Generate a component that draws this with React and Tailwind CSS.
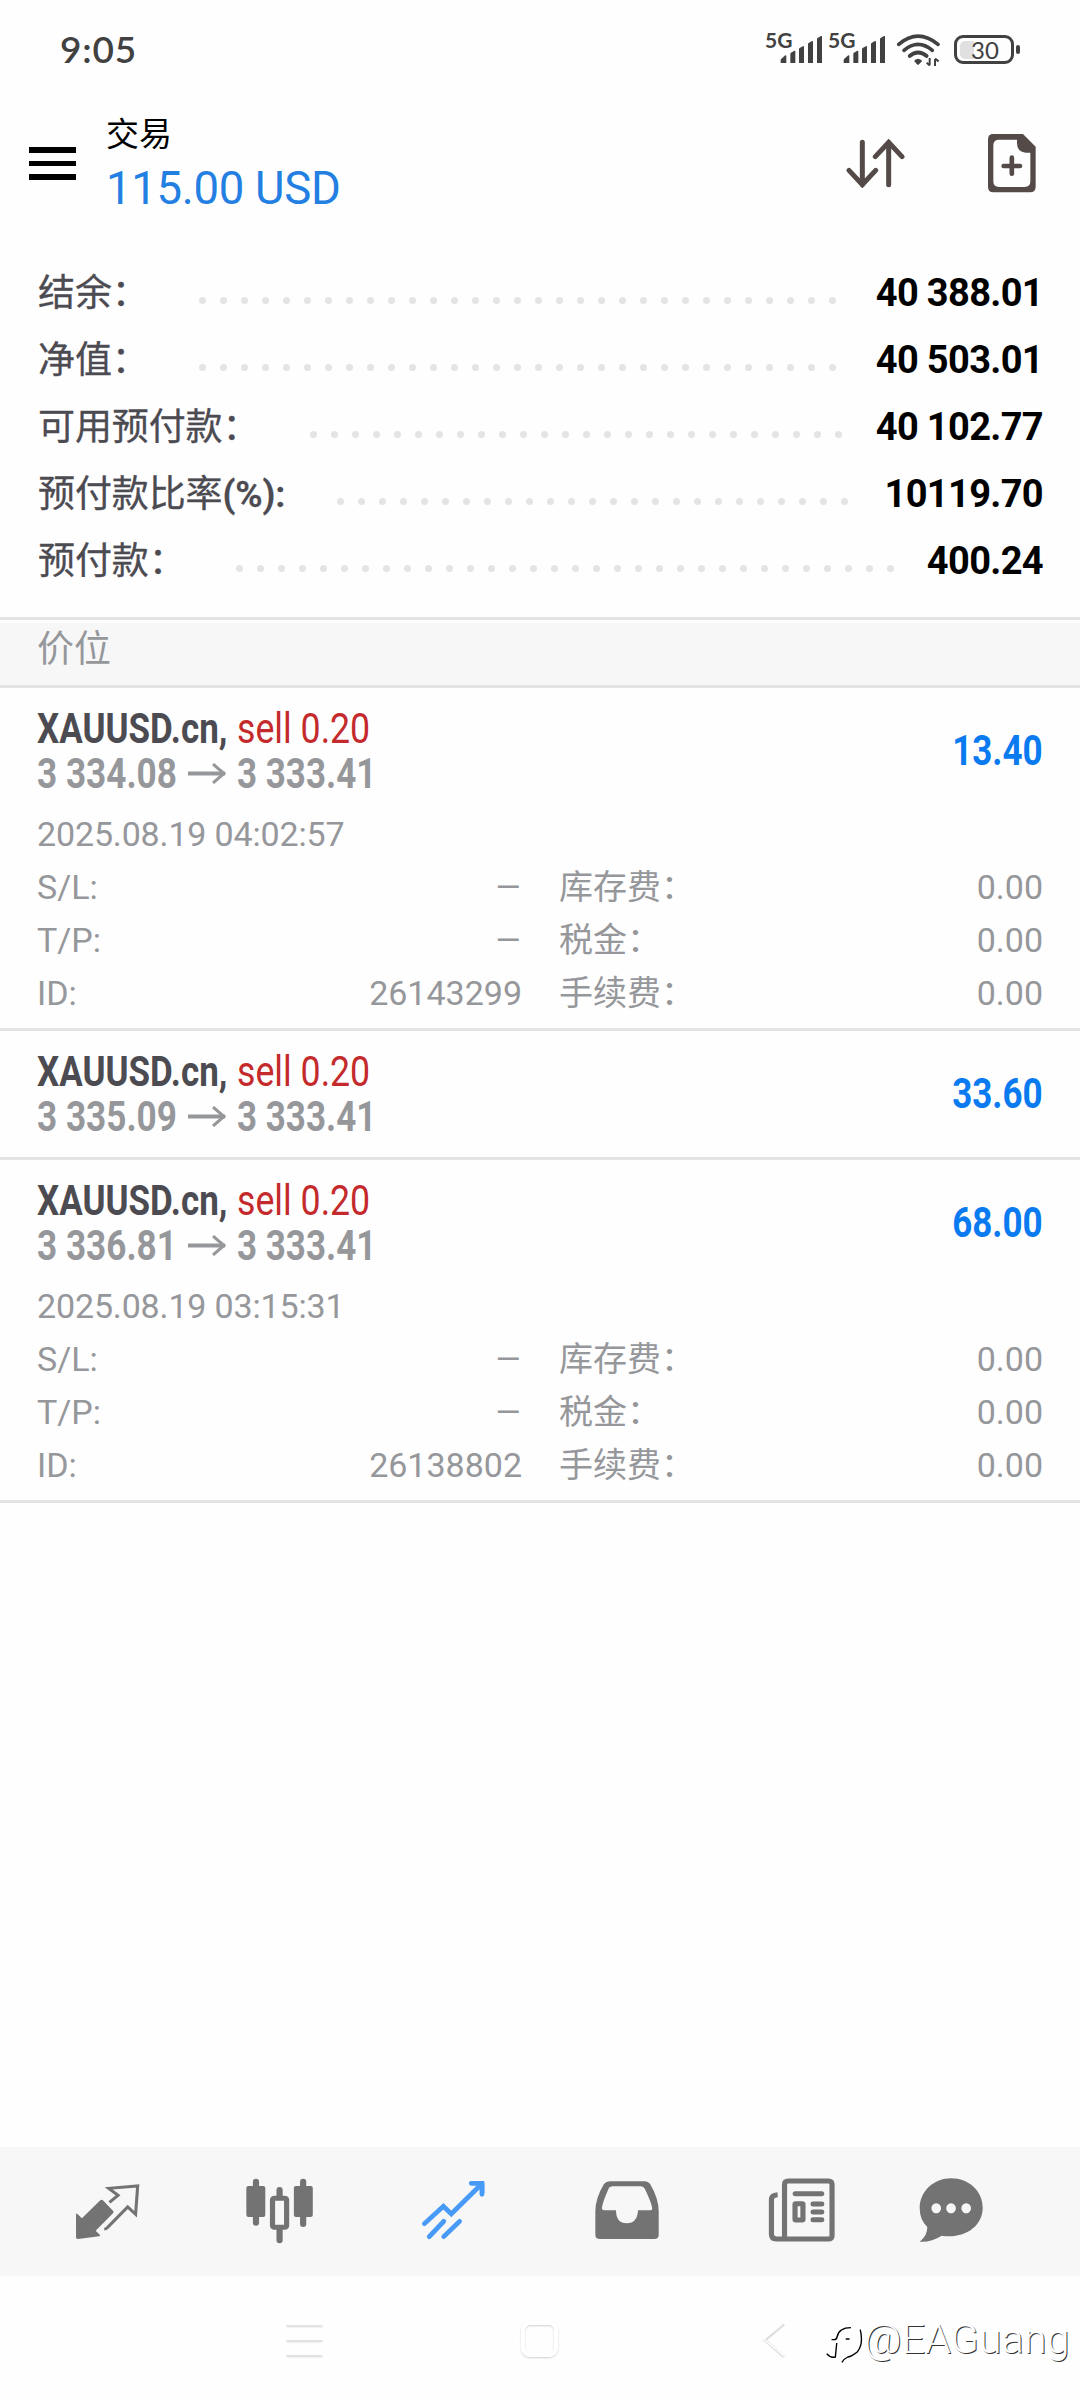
const GREY = "#737373";

/* Icons on the tab bar share one drawing grid of 2.904 x 3 units per pixel. */
function Glyph({ x, y, w, h, className = "", children }) {
  return (
    <svg
      className={"block shrink-0 " + className}
      style={{ width: w / 2.904, height: h / 3 }}
      viewBox={`${x} ${y} ${w} ${h}`}
      preserveAspectRatio="none"
      fill="none"
    >
      {children}
    </svg>
  );
}

function Signal() {
  return (
    <div className="flex h-[40px] w-[57px] items-start">
      <span className="-mt-px w-[15px] text-[21px] leading-[22px] font-bold text-[#414141] font-['Lato',sans-serif]">5G</span>
      <svg className="mt-[6px] h-[27px] w-[42px] shrink-0" viewBox="0 0 126 80" preserveAspectRatio="none" fill="#414141">
        <path d="M2 79v-7q0-3 3-5l10-9q4-2 4 2v19q0 2-2 2H4q-2 0-2-2z" />
        <path d="M31 79V53q0-3 3-4l9-5q3-1 3 2v33q0 2-2 2H33q-2 0-2-2z" />
        <path d="M57 79V39q0-3 3-4l9-5q3-1 3 2v47q0 2-2 2H59q-2 0-2-2z" />
        <path d="M84 79V24q0-3 3-4l9-5q3-1 3 2v62q0 2-2 2H86q-2 0-2-2z" />
        <path d="M111 79V9q0-3 3-4l9-5q3-1 3 2v77q0 2-2 2h-11q-2 0-2-2z" />
      </svg>
    </div>
  );
}

function StatusBar() {
  return (
    <div className="flex h-[104px] items-start justify-between pl-[60px] pr-[60px] pt-[30px]">
      <span className="-mt-px text-[37px] leading-[40px] tracking-[0.8px] font-semibold text-[#414141] font-['Lato',sans-serif]">9:05</span>
      <div className="flex items-start">
        <div className="flex gap-[6px]">
          <Signal />
          <Signal />
        </div>
        <svg className="ml-[12px] mt-[4px] h-[34px] w-[43px]" viewBox="473 102 129 102" fill="none" stroke="#414141">
          <path d="M478 133Q536 84 596 133" strokeWidth="11" strokeLinecap="round" />
          <path d="M494 151Q536 115 579 151" strokeWidth="11" strokeLinecap="round" />
          <path d="M511 168Q536 147 562 168" strokeWidth="11" strokeLinecap="round" />
          <path d="M525 184q0-6 11-8 11 2 12 8l-9 9q-3 3-6 0z" fill="#414141" stroke="none" />
          <path d="M571 174v22M562 188l9 9M587 198v-21M587 176l11 8" strokeWidth="6" />
        </svg>
        <div className="ml-[14px] mt-[5px] flex items-center gap-[2px]">
          <div className="flex h-[29px] w-[60px] items-center rounded-[9px] border-[3px] border-[#414141] p-[3px]">
            <div className="h-[18px] w-[14px] shrink-0 rounded-l-[5px] bg-[#e0e0e0]" />
            <span className="-ml-[3px] text-[24px] leading-[20px] text-[#414141] font-['Lato',sans-serif]">30</span>
          </div>
          <div className="h-[9px] w-[4px] rounded-[2px] bg-[#414141]" />
        </div>
      </div>
    </div>
  );
}

function Header() {
  return (
    <header className="flex h-[154px] items-start">
      <div className="ml-[29px] mt-[43px] flex w-[47px] flex-col gap-[8px]">
        <div className="h-[5.5px] bg-black" />
        <div className="h-[5.5px] bg-black" />
        <div className="h-[5.5px] bg-black" />
      </div>
      <div className="ml-[30px] mt-[10px] flex flex-col">
        <span className="text-[33px] leading-[42px] text-black">交易</span>
        <span className="mt-[5px] text-[45.500px] leading-[56px] tracking-[-0.3px] text-[#237fe2]">115.00 USD</span>
      </div>
      <div className="ml-auto flex items-start pr-[44px] pt-[30px]">
        <svg className="mt-[5px] h-[49px] w-[60px]" viewBox="318 417 180 147" fill="none" stroke="#544b48" strokeWidth="15" strokeLinecap="round">
          <path d="M367 427v127M327 511l40 43 40-43M446 554V427M406 470l40-43 40 43" />
        </svg>
        <svg className="ml-[82px] h-[59px] w-[48px]" viewBox="743 403 144 177">
          <path fill="#544b48" fillRule="evenodd" d="M759 403h89l38 38v120q0 17-17 17H759q-16 0-16-17V419q0-16 16-16zM776 420q-17 0-17 17v108q0 17 17 17h77q17 0 17-17v-86h-14q-26-2-26-28v-11z" />
          <path stroke="#544b48" strokeWidth="14" strokeLinecap="round" d="M790 499h49M814.500 474v48" />
        </svg>
      </div>
    </header>
  );
}

const SUMMARY = [
  { label: "结余：", value: "40 388.01", dots: 31, start: 199 },
  { label: "净值：", value: "40 503.01", dots: 31, start: 199 },
  { label: "可用预付款：", value: "40 102.77", dots: 26, start: 310 },
  { label: "预付款比率", unit: "(%):", value: "10119.70", dots: 25, start: 337 },
  { label: "预付款：", value: "400.24", dots: 32, start: 236 },
];

function Summary() {
  return (
    <section className="flex h-[359px] flex-col pl-[38px] pr-[37px]">
      {SUMMARY.map((r) => (
        <div key={r.label} className="flex h-[67px] items-center">
          <div className="shrink-0 pt-[4px] text-[37px] leading-[67px] tracking-[-0.1px] whitespace-nowrap text-[#4c4b52] [-webkit-text-stroke:0.3px_#4c4b52]" style={{ width: r.start - 38 }}>
            {r.label}
            {r.unit && <span className="font-semibold">{r.unit}</span>}
          </div>
          <div className="mt-[18px] flex gap-[14px]">
            {Array.from({ length: r.dots }, (_, i) => (
              <span key={i} className="size-[7px] rounded-full bg-[#e4e4e4]" />
            ))}
          </div>
          <div className="ml-auto pt-[3px] text-[38px] leading-[67px] tracking-[-0.65px] font-bold whitespace-nowrap text-black">{r.value}</div>
        </div>
      ))}
    </section>
  );
}

function Arrow() {
  return (
    <svg className="ml-[12px] mr-[11px] h-[21px] w-[38px]" viewBox="0 0 38 21" fill="none" stroke="#96979b">
      <path d="M0 10.500h37" strokeWidth="4" />
      <path d="M25 1l11 9.500L25 20" strokeWidth="3" />
    </svg>
  );
}

function DetailRow({ name, value, name2, value2 }) {
  return (
    <div className="flex h-[53px] items-center text-[34px] leading-[53px]">
      <span>{name}</span>
      {value ? (
        <span className="ml-auto">{value}</span>
      ) : (
        <span className="ml-auto inline-block origin-right scale-x-[1.25]">–</span>
      )}
      <div className="ml-[37px] flex w-[484px] justify-between">
        <span>{name2}</span>
        <span>{value2}</span>
      </div>
    </div>
  );
}

function Position({ open, profit, time, id }) {
  return (
    <article className="border-b-[3px] border-[#e3e3e3] pl-[37px] pr-[37px]">
      <div className="flex h-[120px] items-start justify-between">
        <div className="pt-[18px]">
          <div className="flex h-[45px] items-center text-[42px] leading-[45px] whitespace-pre">
            <div className="w-[200px]">
              <span className="inline-block origin-left scale-x-[0.833] font-bold text-[#4c4b52]">XAUUSD.cn,</span>
            </div>
            <span className="inline-block origin-left scale-x-[0.85] text-[#c42a2b]">sell 0.20</span>
          </div>
          <div className="flex h-[45px] items-center text-[42px] leading-[45px] font-bold whitespace-pre text-[#96979b]">
            <div className="w-[139px]">
              <span className="inline-block origin-left scale-x-[0.837]">{open}</span>
            </div>
            <Arrow />
            <span className="inline-block origin-left scale-x-[0.833]">3 333.41</span>
          </div>
        </div>
        <div className="origin-right scale-x-[0.833] pt-[40px] text-[42px] leading-[45px] font-bold text-[#0a7af0]">{profit}</div>
      </div>
      {time ? (
        <div className="h-[220px] text-[#96979b]">
          <div className="h-[53px] text-[34px] leading-[53px] tracking-[-0.15px]">{time}</div>
          <DetailRow name="S/L:" name2="库存费：" value2="0.00" />
          <DetailRow name="T/P:" name2="税金：" value2="0.00" />
          <DetailRow name="ID:" value={id} name2="手续费：" value2="0.00" />
        </div>
      ) : (
        <div className="h-[6px]" />
      )}
    </article>
  );
}

function TabBar() {
  return (
    <nav className="flex h-[129px] items-start bg-[#f7f7f7] pl-[75px]">
      <Glyph x={218} y={158} w={190} h={172} className="mt-[36px]">
        <path fill={GREY} d="M221 252q0-4 4-1l13 13 52-53q5-5 9-1l30 32q2 3 0 6l-51 53 12 12q2 5-2 5l-61 8q-6 1-6-5z" />
        <path stroke={GREY} strokeWidth="9" strokeLinejoin="miter" d="M318 216l25-21-27-21 84-7-6 85-23-22-60 63q-2 3-8 3" />
      </Glyph>
      <Glyph x={716} y={144} w={196} h={197} className="ml-[106px] mt-[31px]">
        <path stroke={GREY} strokeWidth="18" strokeLinecap="round" d="M745 155v123M882 155v127M813.500 180v20M813.500 300v31" />
        <rect x="717" y="168" width="55" height="93" rx="6" fill={GREY} />
        <rect x="855" y="168" width="55" height="93" rx="6" fill={GREY} />
        <rect x="793" y="205" width="41" height="87" rx="5" stroke={GREY} strokeWidth="15" />
      </Glyph>
      <Glyph x={1222} y={150} w={188} h={180} className="ml-[107px] mt-[33px]">
        <g stroke="#479af6" strokeWidth="14" strokeLinejoin="miter" strokeLinecap="round">
          <path d="M1232 281l55-52 23 23 88-90" />
          <path d="M1368 160h31v33" />
          <path d="M1246 320l42-46M1288 320l46-46" />
        </g>
        <path fill="#479af6" d="M1378 160h28v30z" />
      </Glyph>
      <Glyph x={160} y={152} w={188} h={176} className="ml-[109px] mt-[34px]">
        <path fill={GREY} fillRule="evenodd" d="M203 153h102q10 0 15 8 25 43 25 82v70q0 13-13 13H174q-13 0-13-13v-70q0-39 25-82 6-8 17-8zM212 168q-10 0-13 8-19 45-19 58 0 6 7 6h34q0 39 31 39t33-39h35q7 0 6-7-2-16-21-57-3-8-12-8z" />
      </Glyph>
      <Glyph x={662} y={143} w={196} h={194} className="ml-[109px] mt-[31px]">
        <g stroke={GREY} strokeWidth="15">
          <path d="M711 326h126q11 0 11-10V163q0-11-11-11H721q-11 0-11 11v163h-24q-14 0-14-14V208q0-14 18-15" />
          <path d="M741 190h77M793 221h25M793 245h25M793 268h25" strokeLinecap="round" />
          <rect x="740.500" y="220" width="23" height="49" rx="2" />
        </g>
      </Glyph>
      <Glyph x={1100} y={143} w={188} h={194} className="ml-[83px] mt-[31px]">
        <path fill={GREY} fillRule="evenodd" d="M1193 144c52 0 92 38 92 88 0 57-54 94-119 84q-30 20-64 18c16-13 22-28 22-44q-22-22-22-56c0-52 42-90 91-90zM1150 219a14 15 0 1 0 .1 0zM1193 219a14 15 0 1 0 .1 0zM1237 219a14 15 0 1 0 .1 0z" />
      </Glyph>
    </nav>
  );
}

function SystemNav() {
  return (
    <div className="flex h-[124px] items-start pt-[49px]">
      <div className="ml-[286px] flex w-[37px] flex-col gap-[13px]">
        <div className="h-[2px] rounded-b-full bg-[#e3e3e3] shadow-[0_1px_1px_#f0f0f0]" />
        <div className="h-[2px] rounded-b-full bg-[#e3e3e3] shadow-[0_1px_1px_#f0f0f0]" />
        <div className="h-[2px] rounded-b-full bg-[#e3e3e3] shadow-[0_1px_1px_#f0f0f0]" />
      </div>
      <div className="-mt-[4px] ml-[198px] h-[36px] w-[37px] rounded-[9px] border-[4px] border-white shadow-[0_1px_2px_#d0d0d0,inset_0_1px_2px_#d0d0d0]" />
      <svg className="-mt-[3px] ml-[203px] h-[38px] w-[25px]" viewBox="0 0 25 38" fill="none">
        <path d="M23 2L4 18l19 17" stroke="#dedede" strokeWidth="3" />
        <path d="M23 0.500L3 17l20 17" stroke="#fefefe" strokeWidth="1.500" />
      </svg>
      <svg className="ml-[39px] h-[40px] w-[38px]" viewBox="828 586 110 120" preserveAspectRatio="none" fill="none" stroke="#000">
        <path d="M847 630h8q6 0 8-8 5-28 40-28M862 640l-4 42q-14 4-25-10M930 600q10 42-8 66-16 14-28 16-12 6-17 16M888 628h11" strokeWidth="4" />
      </svg>
      <span className="-mt-[10px] ml-[1px] text-[41px] leading-[48px] font-light tracking-[0.2px] text-white [text-shadow:1px_1px_0_#333]">@EAGuang</span>
    </div>
  );
}

export default function App() {
  return (
    <div className="flex h-[2400px] w-[1080px] flex-col overflow-hidden bg-[#fefefe] font-['Roboto','Noto_Sans_CJK_SC',sans-serif]">
      <StatusBar />
      <Header />
      <Summary />
      <div className="h-[3px] bg-[#e3e3e3]" />
      <div className="mt-[3px] h-[65px] border-b-[3px] border-[#e3e3e3] bg-[#f7f7f7] pl-[37px] text-[37px] leading-[54px] text-[#96979b]">价位</div>
      <Position open="3 334.08" profit="13.40" time="2025.08.19 04:02:57" id="26143299" />
      <Position open="3 335.09" profit="33.60" />
      <Position open="3 336.81" profit="68.00" time="2025.08.19 03:15:31" id="26138802" />
      <div className="flex-1" />
      <TabBar />
      <SystemNav />
    </div>
  );
}
